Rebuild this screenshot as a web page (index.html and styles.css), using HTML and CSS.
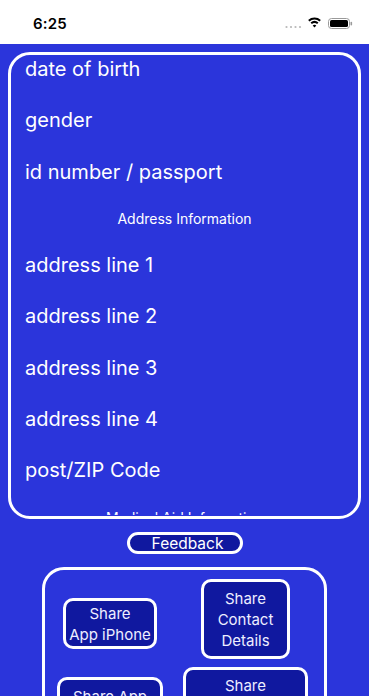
FILE: index.html
```html
<!DOCTYPE html>
<html>
<head>
<meta charset="utf-8">
<link rel="stylesheet" href="styles.css">
</head>
<body>
<div class="status">
  <span class="time">6:25</span>
  <svg class="sys" width="68" height="12" viewBox="0 0 68 12">
    <circle cx="1.5" cy="10" r="1.1" fill="#b8b8b8"/>
    <circle cx="6" cy="10" r="1.1" fill="#b8b8b8"/>
    <circle cx="10.5" cy="10" r="1.1" fill="#b8b8b8"/>
    <circle cx="15" cy="10" r="1.1" fill="#b8b8b8"/>
    <path d="M23.8 3.7 A8.5 8.5 0 0 1 35.2 3.7" fill="none" stroke="#000" stroke-width="2"/>
    <path d="M26.2 6.3 A5 5 0 0 1 32.8 6.3" fill="none" stroke="#000" stroke-width="2"/>
    <path d="M29.5 10.6 L27.7 8.5 A2.6 2.6 0 0 1 31.3 8.5 Z" fill="#000"/>
    <rect x="43.5" y="1.5" width="21" height="10" rx="3" fill="none" stroke="#9a9a9a" stroke-width="1"/>
    <rect x="45" y="3" width="18" height="7" rx="1.6" fill="#000"/>
    <rect x="65.5" y="4.7" width="1.6" height="3.8" rx="0.8" fill="#9a9a9a"/>
  </svg>
</div>
<div class="app">
  <div class="card">
    <div class="scroll">
      <div class="list">
        <div class="field">date of birth</div>
        <div class="field">gender</div>
        <div class="field">id number / passport</div>
        <div class="section">Address Information</div>
        <div class="field">address line 1</div>
        <div class="field">address line 2</div>
        <div class="field">address line 3</div>
        <div class="field">address line 4</div>
        <div class="field">post/ZIP Code</div>
        <div class="section">Medical Aid Information</div>
        <div class="field">medical aid name</div>
      </div>
    </div>
  </div>
  <div class="feedback-row">
    <div class="feedback">Feedback</div>
  </div>
  <div class="share-box">
    <div class="share-grid">
      <div class="btn b-iphone">Share<br>App iPhone</div>
      <div class="btn b-contact">Share<br>Contact<br>Details</div>
      <div class="btn b-android">Share App<br>Android</div>
      <div class="btn b-medical">Share<br>Medical Details</div>
    </div>
  </div>
</div>
</body>
</html>
```

FILE: styles.css
```css
html, body {
  margin: 0;
  padding: 0;
  background: #ffffff;
  font-family: Inter, "Noto Sans", "Liberation Sans", sans-serif;
}

.status {
  height: 44px;
  display: flex;
  align-items: flex-start;
  background: #ffffff;
}

.time {
  margin: 14px 0 0 33px;
  font-size: 15px;
  line-height: 20px;
  font-weight: 600;
  color: #000;
  letter-spacing: 0.2px;
}

.sys {
  display: block;
  margin: 17px 0 0 auto;
  margin-right: 39px;
}

.app {
  width: 369px;
  height: 652px;
  background: #2b35db;
  overflow: hidden;
}

.card {
  box-sizing: border-box;
  margin: 8px 0 0 8px;
  width: 353px;
  height: 467px;
  border: 3px solid #ffffff;
  border-radius: 22px;
}

.scroll {
  height: 460px;
  overflow: hidden;
}

.list {
  margin-top: -11px;
  padding-left: 14px;
}

.field {
  height: 51.4px;
  line-height: 51.4px;
  font-size: 20px;
  color: #ffffff;
  white-space: nowrap;
}

.section {
  height: 41.6px;
  line-height: 41.6px;
  font-size: 14px;
  color: #ffffff;
  text-align: center;
  margin-left: -14px;
}

.feedback-row {
  display: flex;
  justify-content: center;
  margin-top: 13px;
}

.feedback {
  box-sizing: border-box;
  width: 116px;
  height: 22px;
  border: 3px solid #ffffff;
  border-radius: 11px;
  background: #10189f;
  color: #ffffff;
  font-size: 15.5px;
  line-height: 17px;
  text-align: center;
  padding-left: 6px;
}

.share-box {
  box-sizing: border-box;
  margin: 13px 0 0 42px;
  width: 285px;
  height: 200px;
  border: 3px solid #ffffff;
  border-radius: 22px;
  padding-top: 9px;
}

.share-grid {
  display: grid;
  grid-template-columns: 130px 141px;
  row-gap: 8px;
  justify-items: center;
  align-items: start;
}

.btn {
  box-sizing: border-box;
  display: flex;
  align-items: center;
  justify-content: center;
  text-align: center;
  border: 3px solid #ffffff;
  border-radius: 10px;
  background: #10189f;
  color: #eeeeff;
  font-size: 15px;
  line-height: 21px;
  white-space: nowrap;
}

.b-iphone {
  width: 94px;
  height: 51px;
  margin-top: 19px;
}

.b-contact {
  width: 89px;
  height: 80px;
}

.b-android {
  width: 106px;
  height: 60px;
  margin-top: 10px;
}

.b-medical {
  width: 125px;
  height: 60px;
  align-items: flex-start;
  padding-top: 5px;
}
```
